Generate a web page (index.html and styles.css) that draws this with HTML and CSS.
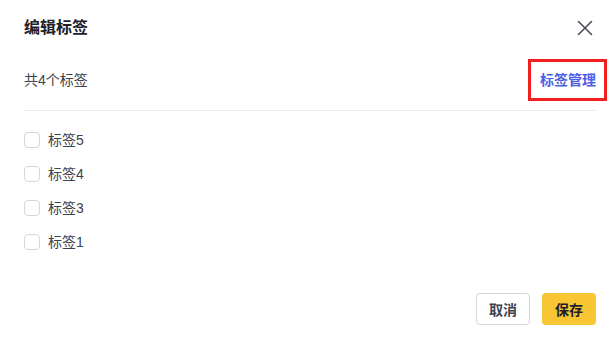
FILE: index.html
```html
<!DOCTYPE html>
<html lang="zh-CN">
<head>
<meta charset="utf-8">
<title>编辑标签</title>
<link rel="stylesheet" href="styles.css">
</head>
<body>
<div class="modal">
  <div class="header">
    <div class="title">编辑标签</div>
    <button class="close" aria-label="关闭">
      <svg width="16" height="16" viewBox="0 0 16 16"><path d="M1.5 1.5 L14.5 14.5 M14.5 1.5 L1.5 14.5" stroke="#4a4f5a" stroke-width="1.6" stroke-linecap="round" fill="none"/></svg>
    </button>
  </div>
  <div class="toolbar">
    <span class="count">共4个标签</span>
    <a class="manage">标签管理</a>
  </div>
  <div class="divider"></div>
  <ul class="list">
    <li class="item"><span class="box"></span><span class="label">标签5</span></li>
    <li class="item"><span class="box"></span><span class="label">标签4</span></li>
    <li class="item"><span class="box"></span><span class="label">标签3</span></li>
    <li class="item"><span class="box"></span><span class="label">标签1</span></li>
  </ul>
  <div class="footer">
    <button class="btn btn-cancel">取消</button>
    <button class="btn btn-save">保存</button>
  </div>
</div>
</body>
</html>
```

FILE: styles.css
```css
html, body {
  margin: 0;
  padding: 0;
  background: #ffffff;
}
body {
  font-family: "Liberation Sans", "Noto Sans CJK SC", sans-serif;
  color: #1d2129;
}
.modal {
  width: 615px;
  height: 340px;
  box-sizing: border-box;
  padding: 0 19px 0 24px;
  background: #fff;
  border-radius: 6px;
}
.header {
  height: 56px;
  display: flex;
  align-items: center;
  justify-content: space-between;
}
.title {
  font-size: 16px;
  font-weight: 700;
  line-height: 24px;
  color: #1d2129;
}
.close {
  border: 0;
  background: none;
  padding: 0;
  width: 16px;
  height: 16px;
  margin-right: 3px;
  display: flex;
}
.toolbar {
  height: 48px;
  display: flex;
  align-items: center;
  justify-content: space-between;
}
.count {
  font-size: 14px;
  color: #3d424d;
  line-height: 22px;
}
.manage {
  position: relative;
  font-size: 14px;
  font-weight: 700;
  color: #4b5ee6;
  line-height: 22px;
  margin-right: 0;
}
.manage::after {
  content: "";
  position: absolute;
  top: -10px;
  bottom: -10px;
  left: -12px;
  right: -11px;
  border: 3px solid #f21f1f;
}
.divider {
  margin-top: 6px;
  height: 1px;
  background: #e8e9ee;
}
.list {
  list-style: none;
  margin: 0;
  padding: 12px 0 0;
}
.item {
  height: 34px;
  display: flex;
  align-items: center;
}
.box {
  width: 14px;
  height: 14px;
  border: 1px solid #d3d6e0;
  border-radius: 4px;
  margin-right: 8px;
  background: #fff;
}
.label {
  font-size: 14px;
  color: #3d424d;
  line-height: 22px;
}
.footer {
  margin-top: 34px;
  display: flex;
  justify-content: flex-end;
  gap: 12px;
}
.btn {
  width: 54px;
  height: 32px;
  box-sizing: border-box;
  border-radius: 4px;
  font-family: "Liberation Sans", "Noto Sans CJK SC", sans-serif;
  font-size: 14px;
  font-weight: 700;
  padding: 0;
}
.btn-cancel {
  background: #fff;
  border: 1px solid #d4d7e0;
  color: #3d424d;
}
.btn-save {
  background: #f9c633;
  border: 0;
  color: #1d2129;
}
```
